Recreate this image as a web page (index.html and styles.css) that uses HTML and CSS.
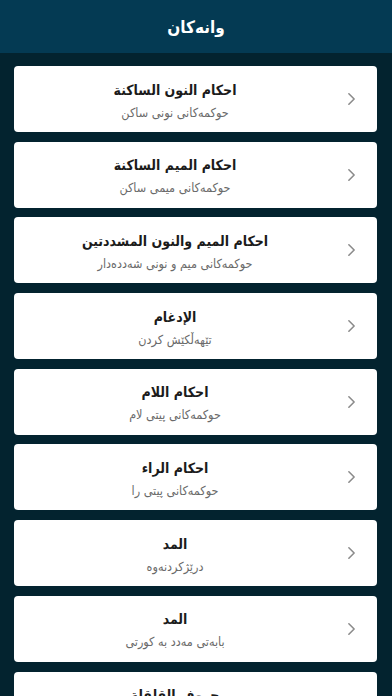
FILE: index.html
```html
<!DOCTYPE html>
<html lang="ckb" dir="rtl">
<head>
  <meta charset="utf-8">
  <link rel="stylesheet" href="styles.css">
</head>
<body>
  <div class="app">
    <header class="top-bar">
      <h1>وانەکان</h1>
    </header>

    <ul class="lesson-list">
      <li class="lesson">
        <div class="lesson-text">
          <span class="lesson-title">احكام النون الساكنة</span>
          <span class="lesson-sub">حوکمەکانی نونی ساکن</span>
        </div>
        <svg class="chevron" viewBox="0 0 10 16"><polyline points="2,2 8,8 2,14" /></svg>
      </li>
      <li class="lesson">
        <div class="lesson-text">
          <span class="lesson-title">احكام الميم الساكنة</span>
          <span class="lesson-sub">حوکمەکانی میمی ساکن</span>
        </div>
        <svg class="chevron" viewBox="0 0 10 16"><polyline points="2,2 8,8 2,14" /></svg>
      </li>
      <li class="lesson">
        <div class="lesson-text">
          <span class="lesson-title">احكام الميم والنون المشددتين</span>
          <span class="lesson-sub">حوکمەکانی میم و نونی شەددەدار</span>
        </div>
        <svg class="chevron" viewBox="0 0 10 16"><polyline points="2,2 8,8 2,14" /></svg>
      </li>
      <li class="lesson">
        <div class="lesson-text">
          <span class="lesson-title">الإدغام</span>
          <span class="lesson-sub">تێهەڵکێش کردن</span>
        </div>
        <svg class="chevron" viewBox="0 0 10 16"><polyline points="2,2 8,8 2,14" /></svg>
      </li>
      <li class="lesson">
        <div class="lesson-text">
          <span class="lesson-title">احكام اللام</span>
          <span class="lesson-sub">حوکمەکانی پیتی لام</span>
        </div>
        <svg class="chevron" viewBox="0 0 10 16"><polyline points="2,2 8,8 2,14" /></svg>
      </li>
      <li class="lesson">
        <div class="lesson-text">
          <span class="lesson-title">احكام الراء</span>
          <span class="lesson-sub">حوکمەکانی پیتی را</span>
        </div>
        <svg class="chevron" viewBox="0 0 10 16"><polyline points="2,2 8,8 2,14" /></svg>
      </li>
      <li class="lesson">
        <div class="lesson-text">
          <span class="lesson-title">المد</span>
          <span class="lesson-sub">درێژکردنەوە</span>
        </div>
        <svg class="chevron" viewBox="0 0 10 16"><polyline points="2,2 8,8 2,14" /></svg>
      </li>
      <li class="lesson">
        <div class="lesson-text">
          <span class="lesson-title">المد</span>
          <span class="lesson-sub">بابەتی مەدد بە کورتی</span>
        </div>
        <svg class="chevron" viewBox="0 0 10 16"><polyline points="2,2 8,8 2,14" /></svg>
      </li>
      <li class="lesson">
        <div class="lesson-text">
          <span class="lesson-title">حروف القلقلة</span>
          <span class="lesson-sub">پیتەکانی قەلقەلە</span>
        </div>
        <svg class="chevron" viewBox="0 0 10 16"><polyline points="2,2 8,8 2,14" /></svg>
      </li>
    </ul>
  </div>
</body>
</html>
```

FILE: styles.css
```css
html, body {
  margin: 0;
  padding: 0;
}

body {
  font-family: "DejaVu Sans Condensed", "DejaVu Sans", sans-serif;
  background-color: #03232f;
}

.app {
  height: 696px;
  overflow: hidden;
}

.top-bar {
  height: 53px;
  background-color: #043a53;
  display: flex;
  align-items: center;
  justify-content: center;
}

.top-bar h1 {
  margin: 0;
  color: #fff;
  font-size: 17px;
  font-weight: bold;
}

.lesson-list {
  list-style: none;
  margin: 0;
  padding: 13px 15px 0 14px;
  display: flex;
  flex-direction: column;
  gap: 9.7px;
}

.lesson {
  height: 66px;
  flex-shrink: 0;
  background-color: #fff;
  border-radius: 4px;
  display: flex;
  align-items: center;
  direction: ltr;
}

.lesson-text {
  flex: 1;
  direction: rtl;
  display: flex;
  flex-direction: column;
  align-items: center;
  gap: 7px;
  padding-top: 3px;
}

.lesson-title {
  font-size: 14px;
  font-weight: bold;
  color: #1b1b1b;
}

.lesson-sub {
  font-size: 12.5px;
  color: #6a6a6a;
}

.chevron {
  width: 9px;
  height: 14px;
  margin: 0 21px 0 11px;
  fill: none;
  stroke: #8a8a8a;
  stroke-width: 1.8;
  stroke-linecap: round;
  stroke-linejoin: round;
}
```
